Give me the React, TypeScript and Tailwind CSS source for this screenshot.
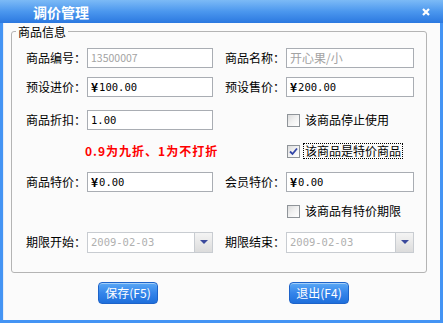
import React from "react";

const cjk = { fontFamily: '"Noto Sans CJK SC", "Noto Sans", sans-serif' };
const mono = { fontFamily: '"DejaVu Sans Mono", "Liberation Mono", monospace' };

function Label({ text }: { text: string }) {
  return (
    <div className="w-[61px] shrink-0 text-[12px] leading-[20px] text-black" style={cjk}>
      {text}
    </div>
  );
}

function Input({ value, width, disabled, yen }: { value: string; width: string; disabled?: boolean; yen?: boolean }) {
  return (
    <div
      className={`${width} h-[20px] shrink-0 border border-[#a9adb3] bg-white flex items-center pl-[3px] ${disabled ? "text-[#a3a3a3]" : "text-black"}`}
    >
      {yen && (
        <span className="text-[12px] font-bold leading-none mr-[1px]" style={cjk}>
          ¥
        </span>
      )}
      <span className="text-[10.5px] leading-none" style={disabled && !yen ? cjk : mono}>
        {value}
      </span>
    </div>
  );
}

function Combo({ value, width }: { value: string; width: string }) {
  return (
    <div className={`${width} h-[21px] shrink-0 border border-[#c8ccd1] bg-white flex items-center`}>
      <span className="flex-1 pl-[3px] text-[10.5px] text-[#b0b0b0] leading-none" style={mono}>
        {value}
      </span>
      <div className="w-[18px] h-[19px] border-l border-[#c8ccd1] bg-gradient-to-b from-[#f4f4f4] to-[#dcdcdc] flex items-center justify-center">
        <svg width="8" height="5" viewBox="0 0 8 5">
          <path d="M0 0 L8 0 L4 4 Z" fill="#3b4a9c" />
        </svg>
      </div>
    </div>
  );
}

function Check({ checked, text, focus }: { checked?: boolean; text: string; focus?: boolean }) {
  return (
    <div className="flex items-center h-[20px] pl-[1px]">
      <div className="w-[13px] h-[13px] border border-[#8f9499] bg-gradient-to-br from-[#dcdcdc] via-[#f2f2f2] to-white flex items-center justify-center">
        {checked && (
          <svg width="9" height="9" viewBox="0 0 9 9">
            <path d="M1 4.5 L3.5 7 L8 1.5" stroke="#3346a8" strokeWidth="1.8" fill="none" />
          </svg>
        )}
      </div>
      <div
        className={`ml-[4px] text-[12px] leading-[14px] px-[1px] text-black ${focus ? "outline outline-1 outline-dotted outline-black" : ""}`}
        style={cjk}
      >
        {text}
      </div>
    </div>
  );
}

function BlueButton({ text }: { text: string }) {
  return (
    <div
      className="w-[60px] h-[22px] rounded-[4px] border border-[#1d63c9] bg-gradient-to-b from-[#5aa8f5] via-[#3585ea] to-[#1e6fdc] flex items-center justify-center text-white text-[12px] leading-none shadow-[inset_0_1px_0_rgba(255,255,255,0.45)]"
      style={cjk}
    >
      {text}
    </div>
  );
}

export default function App() {
  return (
    <div className="w-[443px] h-[323px] flex flex-col bg-[#4494f4]">
      {/* title bar */}
      <div className="h-[23px] shrink-0 bg-gradient-to-b from-[#7cbaf6] via-[#4b97ee] to-[#2b78e0] flex items-center pl-[33px] pr-[13px]">
        <div className="flex-1 text-white font-bold text-[14px] leading-none" style={cjk}>
          调价管理
        </div>
        <svg width="8" height="8" viewBox="0 0 8 8">
          <path d="M1 1 L7 7 M7 1 L1 7" stroke="white" strokeWidth="2.2" />
        </svg>
      </div>
      {/* body */}
      <div className="flex-1 mx-[3px] mb-[3px] bg-[#fbfbfb] border-l border-[#e6eef8] pl-[7px] pr-[13px] pt-[8px] flex flex-col">
        <div className="relative border border-[#b4b4b4] rounded-[3px] h-[242px] pl-[14px] flex flex-col">
          <div className="absolute left-[4px] top-[-8px] bg-[#fbfbfb] px-[2px] text-[12px] leading-[15px] text-black" style={cjk}>
            商品信息
          </div>
          {/* row 1 */}
          <div className="flex mt-[16px]">
            <div className="flex w-[187px]">
              <Label text="商品编号：" />
              <Input value="13500007" width="w-[126px]" disabled />
            </div>
            <div className="flex ml-[12px]">
              <Label text="商品名称：" />
              <div className="w-[128px] h-[20px] border border-[#a9adb3] bg-white flex items-center pl-[3px] text-[12px] text-[#a3a3a3]" style={cjk}>
                开心果/小
              </div>
            </div>
          </div>
          {/* row 2 */}
          <div className="flex mt-[9px]">
            <div className="flex w-[187px]">
              <Label text="预设进价：" />
              <Input value="100.00" width="w-[126px]" yen />
            </div>
            <div className="flex ml-[12px]">
              <Label text="预设售价：" />
              <Input value="200.00" width="w-[128px]" yen />
            </div>
          </div>
          {/* row 3 */}
          <div className="flex mt-[13px]">
            <div className="flex w-[187px]">
              <Label text="商品折扣：" />
              <Input value="1.00" width="w-[126px]" />
            </div>
            <div className="flex ml-[12px]">
              <div className="w-[61px]" />
              <Check text="该商品停止使用" />
            </div>
          </div>
          {/* row 4 */}
          <div className="flex mt-[11px] h-[20px]">
            <div className="flex w-[187px] items-center">
              <div className="w-[59px] shrink-0" />
              <div className="text-[12px] font-bold text-[#ff0000] leading-none tracking-[1px] whitespace-nowrap" style={cjk}>
                0.9为九折、1为不打折
              </div>
            </div>
            <div className="flex ml-[12px]">
              <div className="w-[61px]" />
              <Check text="该商品是特价商品" checked focus />
            </div>
          </div>
          {/* row 5 */}
          <div className="flex mt-[11px]">
            <div className="flex w-[187px]">
              <Label text="商品特价：" />
              <Input value="0.00" width="w-[126px]" yen />
            </div>
            <div className="flex ml-[12px]">
              <Label text="会员特价：" />
              <Input value="0.00" width="w-[128px]" yen />
            </div>
          </div>
          {/* row 6 */}
          <div className="flex mt-[9px]">
            <div className="w-[187px]" />
            <div className="flex ml-[12px]">
              <div className="w-[61px]" />
              <Check text="该商品有特价期限" />
            </div>
          </div>
          {/* row 7 */}
          <div className="flex mt-[11px]">
            <div className="flex w-[187px]">
              <Label text="期限开始：" />
              <Combo value="2009-02-03" width="w-[126px]" />
            </div>
            <div className="flex ml-[12px]">
              <Label text="期限结束：" />
              <Combo value="2009-02-03" width="w-[128px]" />
            </div>
          </div>
        </div>
        {/* buttons */}
        <div className="flex mt-[9px] pl-[87px]">
          <BlueButton text="保存(F5)" />
          <div className="w-[131px]" />
          <BlueButton text="退出(F4)" />
        </div>
      </div>
    </div>
  );
}
